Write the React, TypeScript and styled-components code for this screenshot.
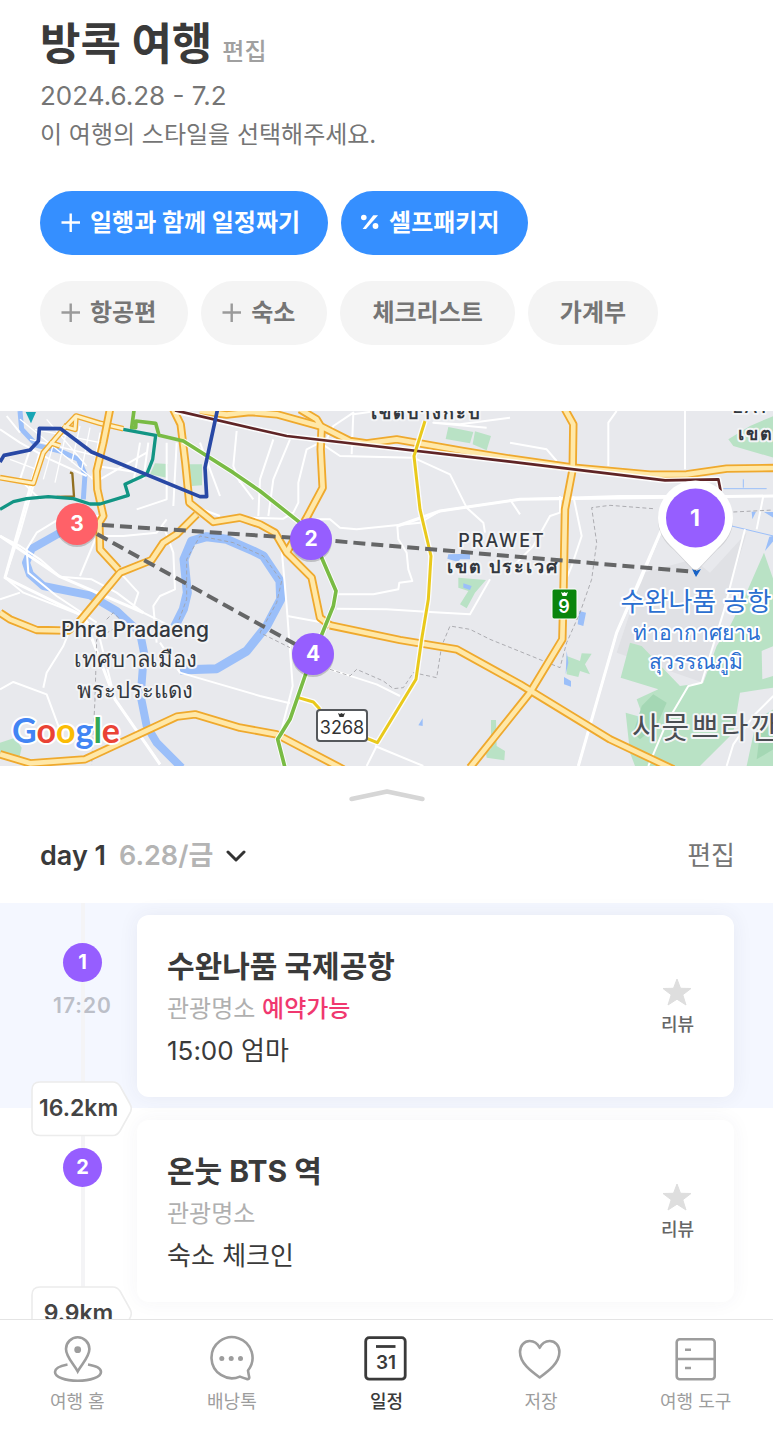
import React from "react";
import styled, { createGlobalStyle } from "styled-components";

const font = `Inter, "Noto Sans CJK KR", "Noto Sans", sans-serif`;

const GlobalStyle = createGlobalStyle`
  *, *::before, *::after { box-sizing: border-box; }
  body { margin: 0; background: #fff; font-family: ${font}; color: #3a3a3a; }
  button { font-family: inherit; border: 0; margin: 0; padding: 0; background: none; cursor: pointer; }
  h1, h2, h3, p, ul { margin: 0; padding: 0; }
  svg { display: block; }
`;

const Screen = styled.div`
  display: flex;
  flex-direction: column;
  height: 100vh;
  background: #fff;
`;

const Content = styled.main`
  flex: 1;
  min-height: 0;
  overflow-y: auto;
  scrollbar-width: none;
`;

const TripHeader = styled.header`
  padding: 12px 40px 66px;
`;

const TitleRow = styled.div`
  display: flex;
  align-items: baseline;
  gap: 10px;
  height: 64px;
`;

const Title = styled.h1`
  font-size: 44px;
  line-height: 64px;
  font-weight: 700;
`;

const TextButton = styled.button<{ $tone: string; $size: number; $weight?: number }>`
  font-size: ${(p) => p.$size}px;
  line-height: 38px;
  font-weight: ${(p) => p.$weight ?? 400};
  color: ${(p) => p.$tone};
`;

const Meta = styled.p<{ $dates?: boolean }>`
  font-size: ${(p) => (p.$dates ? 26 : 24)}px;
  line-height: 39px;
  color: #757575;
`;

const PillRow = styled.div<{ $top: number }>`
  display: flex;
  flex-wrap: wrap;
  gap: 13px;
  margin-top: ${(p) => p.$top}px;
`;

const Pill = styled.button<{ $primary?: boolean; $icon?: boolean }>`
  display: flex;
  align-items: center;
  gap: 8px;
  height: 64px;
  padding: 0 ${(p) => (p.$primary ? 28 : 32)}px 0 ${(p) => (p.$icon ? 20 : 32)}px;
  border-radius: 32px;
  font-size: 24px;
  line-height: 36px;
  font-weight: ${(p) => (p.$primary ? 700 : 600)};
  color: ${(p) => (p.$primary ? "#fff" : "#757575")};
  background: ${(p) => (p.$primary ? "#358fff" : "#f4f4f4")};
`;

const MapFrame = styled.section`
  height: 355px;
  overflow: hidden;
  background: #e8e9ed;
  svg { width: 100%; height: 100%; }
`;

const Handle = styled.button`
  display: flex;
  align-items: center;
  justify-content: center;
  width: 100%;
  height: 58px;
`;

const DayBar = styled.div`
  display: flex;
  align-items: center;
  justify-content: space-between;
  height: 79px;
  padding: 0 38px 16px 40px;
`;

const DayPicker = styled.button`
  display: flex;
  align-items: center;
  gap: 13px;
  font-size: 27px;
  line-height: 38px;
  font-weight: 600;
  color: #3a3a3a;
`;

const DayDate = styled.span`
  color: #b4b4b4;
`;

const Stops = styled.ul`
  list-style: none;
`;

const Stop = styled.li<{ $active?: boolean }>`
  position: relative;
  display: grid;
  grid-template-columns: 137px 1fr;
  padding: 12px 39px 11px 0;
  background: ${(p) => (p.$active ? "#f4f7ff" : "transparent")};
`;

const Timeline = styled.div`
  display: flex;
  flex-direction: column;
  align-items: center;
  gap: 9px;
  margin: -12px 0 -11px;
  padding: 40px 0 0 28px;
  background: linear-gradient(#f4f4f6, #f4f4f6) 81px 0 / 4px 100% no-repeat;
`;

const StopNumber = styled.span`
  width: 39px;
  height: 39px;
  border-radius: 50%;
  background: #965eff;
  color: #fff;
  font-size: 20px;
  line-height: 39px;
  font-weight: 700;
  text-align: center;
`;

const StopTime = styled.time`
  font-size: 21px;
  line-height: 30px;
  font-weight: 600;
  letter-spacing: 1px;
  color: #bcbfc8;
`;

const Card = styled.article<{ $active?: boolean }>`
  display: flex;
  align-items: center;
  justify-content: space-between;
  padding: 30px 40px 26px 30px;
  border-radius: 12px;
  background: #fff;
  box-shadow: 0 0 20px rgba(60, 60, 90, ${(p) => (p.$active ? 0.07 : 0.05)});
`;

const StopTitle = styled.h3`
  font-size: 30px;
  line-height: 42px;
  font-weight: 700;
`;

const StopKind = styled.p`
  font-size: 24px;
  line-height: 44px;
  color: #b0b0b0;
`;

const Bookable = styled.a`
  color: #f0386f;
  font-weight: 500;
  text-decoration: none;
`;

const StopNote = styled.p`
  font-size: 26px;
  line-height: 40px;
`;

const Review = styled.button`
  display: flex;
  flex-direction: column;
  align-items: center;
  gap: 6px;
  font-size: 18px;
  line-height: 26px;
  font-weight: 500;
  color: #666;
`;

const Distance = styled.div`
  position: absolute;
  left: 31px;
  bottom: -29px;
  z-index: 1;
  width: 101px;
  height: 56px;
  svg { position: absolute; inset: 0; }
`;

const DistanceText = styled.span`
  position: relative;
  display: block;
  width: 95px;
  font-size: 23px;
  line-height: 55px;
  font-weight: 600;
  text-align: center;
  color: #444;
`;

const TabBar = styled.nav`
  position: relative;
  z-index: 2;
  display: flex;
  height: 118px;
  padding-top: 14px;
  border-top: 1px solid #e4e4e4;
  background: #fff;
`;

const Tab = styled.a<{ $active?: boolean }>`
  flex: 1;
  display: flex;
  flex-direction: column;
  align-items: center;
  gap: 5px;
  font-size: 18px;
  line-height: 26px;
  font-weight: ${(p) => (p.$active ? 500 : 400)};
  color: ${(p) => (p.$active ? "#3a3a3a" : "#9d9d9d")};
  text-decoration: none;
`;

const Plus = ({ color }: { color: string }) => (
  <svg width="22" height="22" viewBox="0 0 22 22" stroke={color} strokeWidth="2.4">
    <path d="M1.500 10.500H20M10.700 1.500V20" />
  </svg>
);

const Percent = () => (
  <svg width="20" height="22" viewBox="0 0 20 22" fill="#fff">
    <circle cx="2.800" cy="5.500" r="2.800" />
    <circle cx="14.500" cy="14" r="2.900" />
    <path d="M12.300 3.200h4.800L5 17H1.600z" />
  </svg>
);

const Star = () => (
  <svg width="30" height="28" viewBox="0 0 30 28" fill="#dedede" stroke="#dedede" strokeWidth="1" strokeLinejoin="round">
    <path d="M15 1L18.500 10.300L29 10.500L20.800 16.800L24 27L15 21.200L6 27L9.200 16.800L1 10.500L11.500 10.300Z" />
  </svg>
);

const TagShape = () => (
  <svg width="101" height="56" viewBox="0 0 101 56" fill="#fff" stroke="#ececec" strokeWidth="1.600">
    <path d="M9 1H82Q86 1 89 5L99 23Q101.500 27.500 99 32L89 50Q86 54.500 82 54.500H9Q1 54.500 1 46.500V9Q1 1 9 1Z" />
  </svg>
);

const HomeIcon = () => (
  <svg width="52" height="50" viewBox="0 0 52 50" fill="none" stroke="currentColor" strokeWidth="2.600">
    <path d="M26.700 37.500C22.500 29.500 15 23 15 15A11.700 11.700 0 0 1 38.400 15C38.400 23 31 29.500 26.700 37.500Z" />
    <circle cx="26.700" cy="15.700" r="3.400" fill="currentColor" stroke="none" />
    <path d="M16.500 30.500C8 32 4 35 4 38C4 43 14 46.800 26.700 46.800S50 43 50 38C50 35 46 32 37 30.500" />
  </svg>
);

const TalkIcon = () => (
  <svg width="52" height="50" viewBox="0 0 52 50" fill="none" stroke="currentColor" strokeWidth="2.600" strokeLinejoin="round">
    <path d="M33.900 42.600A20.500 20.500 0 1 1 42 36.500Q42.600 40.500 43.200 43Q43.600 45.500 40.900 45.100Q37.400 44 33.900 42.600Z" />
    <g fill="currentColor" stroke="none">
      <circle cx="15.800" cy="24.500" r="2.500" />
      <circle cx="25.200" cy="24.500" r="2.500" />
      <circle cx="34.500" cy="24.500" r="2.500" />
    </g>
  </svg>
);

const CalendarIcon = () => (
  <svg width="52" height="50" viewBox="0 0 52 50" fill="none" stroke="currentColor" strokeWidth="2.800">
    <rect x="5.700" y="3.700" width="39.500" height="41.500" rx="3.500" />
    <path d="M16 12.500H35.500" />
    <text x="26" y="35" textAnchor="middle" fill="currentColor" stroke="none" fontFamily="Inter, sans-serif" fontSize="19" fontWeight="600">31</text>
  </svg>
);

const HeartIcon = () => (
  <svg width="52" height="50" viewBox="0 0 52 50" fill="none" stroke="currentColor" strokeWidth="2.600" strokeLinejoin="round">
    <path d="M24.700 43.500C15.700 37 5 29 5 18C5 11.500 9.200 7 14.700 7C19.200 7 22.700 9.600 24.700 13.800C26.700 9.600 30.200 7 34.700 7C40.200 7 44.400 11.500 44.400 18C44.400 29 33.700 37 24.700 43.500Z" />
  </svg>
);

const DrawerIcon = () => (
  <svg width="52" height="50" viewBox="0 0 52 50" fill="none" stroke="currentColor" strokeWidth="2.600">
    <rect x="6.700" y="5.300" width="38" height="40" rx="3" />
    <path d="M7 25H45M15 15.700H21M15 34H21" />
  </svg>
);

// Road and transit geometry is kept at three times the map's size.
const HIGHWAYS = [
  "M0 640L30 660L110 692L205 694L240 665L360 520L455 482L490 430L530 405L590 345",
  "M330 30L310 130L290 215L292 270L310 350L298 370L300 450L355 510",
  "M520 30L542 75L556 190L568 310L640 368L720 355L780 375L825 400L860 460L935 535L960 655L990 678",
  "M990 678L1200 722L1370 750L1560 855L1830 1020L2020 1110",
  "M600 35L680 46L750 38L830 45L965 82L1050 125L1100 132L1190 120L1390 155L1530 178L1720 205L1950 226L2060 225L2180 208L2320 206",
  "M900 30L950 60L965 85L962 150L968 265L920 355L860 460",
  "M0 1065L90 1092L255 1080L530 952L585 945L720 985L830 1005L1030 1110",
  "M1695 30L1720 75L1718 210L1695 330L1690 600L1687 720L1590 880L1410 1105",
];

const AVENUES = ["M0 235L100 252L130 160L190 90L228 50L300 72L370 88", "M228 50L225 90L190 80M150 130L180 140"];

const STREETS = [
  "M0 410L60 440L120 480L180 532L275 540L350 580L430 640L530 690",
  "M120 160L100 260L60 400L15 535L70 580L250 650L300 720L345 900L480 1095",
  "M0 600L60 580M300 350L200 345L110 400L80 450L85 520L170 590L290 670",
  "M130 865L140 820L190 740L210 690M0 870L40 848L140 885L190 1020",
  "M470 730L460 620L480 590L525 570L520 460L490 380M480 730L540 820L780 890L870 912",
  "M240 530L290 410L370 410L470 400L500 360M360 520L415 580L400 625",
  "M580 320L660 350M600 130L660 290M700 220L760 300M710 95L700 200L720 250",
  "M420 130L400 250M445 130L430 240M500 130L500 300L410 330M530 130L520 320M300 240L440 160M290 200L420 220",
  "M0 90L60 130L150 180L260 230M20 50L60 100M90 150L60 240L120 300",
  "M820 120L780 240L775 350M870 120L820 240L805 350M750 355L850 358L880 340L895 310L895 250L920 150L960 130L1020 170L1240 175L1350 225L1400 325L1450 370L1455 400",
  "M975 130L1000 80L1060 40L1055 165M1060 45L1130 35",
  "M930 360L990 360L1020 385L1070 390L1260 370L1320 335L1560 300L1860 290L2320 290",
  "M1192 380L1195 420L1220 460L1225 510L1237 545L1198 550L1195 570L1120 585H1010",
  "M1010 628L1160 630L1290 638L1410 645L1470 540",
  "M862 650L980 672M845 450L860 620L878 860L840 1010M990 810L1130 855L1200 890",
  "M1125 1040L1270 1100M1130 1040L1100 1100",
  "M1530 130L1640 150L1670 185M1850 35L1825 70L1825 200M2055 35L2055 210M1530 55L1380 75L1300 70L1460 85",
  "M1985 390L1920 550L1850 700L1735 1100M2235 390L2170 640L2105 850L2065 860L2000 970L1945 1100",
  "M1680 290L1680 340L1650 350L1600 440L1550 490M1720 290L1745 410L1715 500L1690 560",
  "M2290 290L2270 390M2320 890L2260 950L2200 1035L2180 1100M1560 345L1530 300",
];

const Roads = () => (
  <g transform="scale(0.33333) translate(0 -35)" fill="none" strokeLinejoin="round">
    <path d="M1930 520L2080 480L2130 520L2240 400L2180 600L2110 850L1850 760Z" fill="#e0e1e5" />
    <g fill="#b9e2c5">
      <path d="M465 192L503 194L500 235L450 225Z" />
      <path d="M567 195L606 195L606 258L575 260Z" />
      <path d="M1345 83L1420 98L1410 132L1337 119ZM1425 96L1473 110L1460 153L1418 135Z" />
      <path d="M1375 535L1458 542L1425 580L1400 627L1380 615L1405 575L1375 565Z" />
      <path d="M1473 962L1488 962L1490 1040L1515 1055L1513 1083L1460 1075L1458 1060L1473 1048Z" />
      <path d="M0 1030L45 1015L65 1045L55 1090L0 1070Z" />
      <path d="M2185 120L2250 80L2320 50V175L2200 140Z" />
      <path d="M2292 460L2320 540V740L2285 755L2287 840L2320 830V865L2220 880L2200 1000L2100 1100H1905L1890 1060L1877 940L1930 955L1910 900L1975 870L1862 835L1890 730L1925 740L2040 860L2110 850L2150 740L2190 680L2235 590Z" />
      <path d="M1700 770L1740 785L1745 762L1775 763L1755 795L1770 825L1740 815L1735 833L1700 825Z" />
      <path d="M2320 930L2270 960L2240 1100H2320Z" />
    </g>
    <path d="M1925 920L1960 885L2000 910L1970 980L1920 1020L1900 1000Z" fill="#a4d7b4" />
    <path d="M2280 1000L2320 970V1050L2270 1080Z" fill="#a4d7b4" />

    <g stroke="#9bbff9">
      <path d="M60 35L65 90L110 138L180 155L235 180L255 225L250 300" strokeWidth="15" />
      <path d="M180 400L95 448L78 490L90 525L130 560L270 588L350 635L420 700L432 760L422 890L440 980L470 1030L545 1105" strokeWidth="24" />
      <path d="M520 690L550 630L562 580L552 480L575 425L620 412L680 420L760 455L790 470L840 545L842 600L800 680L740 755L650 808L540 812" strokeWidth="27" />
    </g>
    <g fill="#9bbff9">
      <path d="M1345 465L1410 463L1410 480L1380 480L1375 488L1342 478ZM1390 552L1415 560L1410 572L1390 565Z" />
      <path d="M1738 635L1758 640L1750 680L1733 675ZM1700 755L1705 790L1697 825ZM1692 833L1713 845V862L1692 855Z" />
      <path d="M1268 957V980L1255 978ZM2255 337L2268 337L2257 360ZM2292 338L2320 338V355ZM2320 410V425L2295 455L2308 412Z" />
    </g>
    <path d="M2195 380L2320 410M2170 268H2300M2230 240V265" stroke="#9bbff9" strokeWidth="3" />

    <g stroke="#fff" strokeWidth="6">
      {STREETS.map((d) => <path key={d} d={d} />)}
    </g>
    <path d="M0 410L180 532L430 640M120 160L15 535L250 650L345 900L480 1095M1192 380L1320 335L1560 300L2320 290M1985 390L1850 700L1735 1100" stroke="#fff" strokeWidth="9" />
    <path
      d="M105 90L300 130M90 120L290 170M60 60L280 240M170 100L130 240M205 70L165 250M240 80L215 190M270 85L245 210M300 100L275 240M140 60L260 200M30 180L110 210"
      stroke="#fff"
      strokeWidth="4"
    />

    <g stroke="#a0a0a5" strokeWidth="2.500" strokeDasharray="12 8">
      <path d="M320 660L340 640L370 670L290 720L285 900L275 1095" />
      <path d="M530 680L560 600L560 480L600 410L700 430L790 470L845 545L830 610L780 700L870 745" />
      <path d="M990 810L1050 830L1070 810L1150 845L1180 868L1210 865L1240 820L1310 835L1325 740L1350 680L1410 690L1470 720L1680 805L1700 730L1740 640L1775 540L1790 430L1775 325L1830 318L1960 328M2200 338L2320 332" />
    </g>

    <g stroke="#efa92d" strokeWidth="17">{AVENUES.map((d) => <path key={d} d={d} />)}</g>
    <g stroke="#fff0c1" strokeWidth="9">{AVENUES.map((d) => <path key={d} d={d} />)}</g>
    <g stroke="#efa92d" strokeWidth="25">{HIGHWAYS.map((d) => <path key={d} d={d} />)}</g>
    <g stroke="#ffe8a8" strokeWidth="14">{HIGHWAYS.map((d) => <path key={d} d={d} />)}</g>

    <g strokeWidth="17" stroke="#fff" opacity="0.9">
      <path d="M525 35L780 92L860 110L1530 187L1995 243L2155 240L2162 275" />
      <path d="M1275 65L1242 170L1260 330L1293 470L1285 600L1265 720L1248 840L1132 1030L1095 1015M895 895L940 908L960 930" />
      <path d="M550 125L700 220L780 275L900 370L965 475L1008 575L1000 620L915 830L870 960L833 1020L855 1105" />
    </g>
    <path d="M525 33L780 92L860 110L1530 187L1995 243L2155 240L2162 275" stroke="#5f2426" strokeWidth="8" />
    <path d="M1275 65L1242 170L1260 330L1293 470L1285 600L1265 720L1248 840L1132 1030L1095 1015M895 895L940 908L960 930" stroke="#e9c91c" strokeWidth="9" />
    <path
      d="M402 33L395 85L407 85L408 65L467 72L477 108L550 125L700 220L780 275L900 370L965 475L1008 575L1000 620L915 830L870 960L833 1020L855 1105"
      stroke="#79bb44"
      strokeWidth="11"
    />
    <path d="M210 219L217 222L222 291L170 293" stroke="#927021" strokeWidth="7" />
    <path d="M0 330L40 307L80 298L145 292L220 298L270 314L300 314L385 288L375 255L440 225L458 180L467 108L370 90" stroke="#129584" strokeWidth="10" />
    <path d="M0 188L12 168L90 152L115 125L118 87L182 88L275 158L600 292L620 292L615 205L652 33" stroke="#2848a5" strokeWidth="11" />
    <path d="M77 38H108L93 72Z" fill="#18a5b5" />
  </g>
);

const NumberPin = ({ x, y, n, color = "#965eff" }: { x: number; y: number; n: number; color?: string }) => (
  <g>
    <circle cx={x} cy={y + 2} r="21" fill="#000" opacity="0.18" />
    <circle cx={x} cy={y} r="21" fill={color} />
    <text x={x} y={y + 7} textAnchor="middle" fill="#fff" fontSize="21" fontWeight="700">{n}</text>
  </g>
);

const TripMap = () => (
  <svg viewBox="0 0 773 355" preserveAspectRatio="xMidYMid slice" fontFamily={font} role="img" aria-label="방콕 여행 지도">
    <Roads />
    <g fill="#33383e" stroke="#f3f4f6" strokeWidth="4" strokeLinejoin="round" paintOrder="stroke" textAnchor="middle">
      <g fontSize="18" fontWeight="600" letterSpacing="2">
        <text x="426" y="8">เขตบางกะปิ</text>
        <text x="502" y="136" fontWeight="500">PRAWET</text>
        <text x="503" y="162">เขต ประเวศ</text>
        <text x="752" y="2" fontWeight="500">LAT</text>
        <text x="756" y="29">เขต</text>
      </g>
      <text x="135" y="226" fontSize="21" fontWeight="500">Phra Pradaeng</text>
      <text x="135" y="256" fontSize="22" fontWeight="500">เทศบาลเมือง</text>
      <text x="135" y="287" fontSize="22" fontWeight="500">พระประแดง</text>
      <text x="706" y="327" fontSize="30" fill="#4a4d52" letterSpacing="2">사뭇쁘라깐</text>
    </g>
    <g fill="#2b6fd0" stroke="#fff" strokeWidth="4" strokeLinejoin="round" paintOrder="stroke" textAnchor="middle">
      <text x="696" y="200" fontSize="26">수완나품 공항</text>
      <text x="696" y="229" fontSize="21" fontWeight="500">ท่าอากาศยาน</text>
      <text x="696" y="258" fontSize="21" fontWeight="500">สุวรรณภูมิ</text>
    </g>

    <g>
      <rect x="317" y="299" width="50" height="31" rx="3" fill="#fff" stroke="#55585c" strokeWidth="2" />
      <path d="M338 302L340 303L341.500 302L343 303L345 302L343.500 306H339.500Z" fill="#333" />
      <text x="342" y="323" fontSize="18" textAnchor="middle" fill="#333">3268</text>
      <rect x="552" y="178" width="25" height="30" rx="2" fill="#0a850d" stroke="#fff" strokeWidth="1" />
      <path d="M561 181L563 182L564.500 181L566 182L568 181L566.500 185H562.500Z" fill="#fff" />
      <text x="564" y="202" fontSize="18" fontWeight="600" textAnchor="middle" fill="#fff">9</text>
    </g>

    <g fontFamily="Lato, sans-serif" fontSize="34" fontWeight="700" stroke="#fff" strokeWidth="4" strokeLinejoin="round" paintOrder="stroke">
      <text x="12" y="332">
        <tspan fill="#4285f4">G</tspan>
        <tspan fill="#ea4335">o</tspan>
        <tspan fill="#fbbc05">o</tspan>
        <tspan fill="#4285f4">g</tspan>
        <tspan fill="#34a853">l</tspan>
        <tspan fill="#ea4335">e</tspan>
      </text>
    </g>

    <g fill="none" stroke="#656667" strokeWidth="4" strokeDasharray="12 6">
      <path d="M102 114L311 128L696 161" />
      <path d="M97 123L313 243" />
    </g>
    <path d="M658 109A37.500 37.500 0 1 1 733 109C733 121 727 131 717 139L699 158Q695.500 161 692 158L674 139C664 131 658 121 658 109Z" fill="#000" opacity="0.1" />
    <path d="M658 107A37.500 37.500 0 1 1 733 107C733 119 727 129 717 138L699 157Q695.500 160 692 157L674 138C664 129 658 119 658 107Z" fill="#fff" />
    <path d="M692 158L696 160L701 158L696 166Z" fill="#1763c8" />
    <circle cx="695.500" cy="107" r="29.500" fill="#965eff" />
    <text x="695" y="115" fontSize="23" fontWeight="700" textAnchor="middle" fill="#fff">1</text>
    <NumberPin x={311} y={128} n={2} />
    <NumberPin x={77} y={113} n={3} color="#ff6168" />
    <NumberPin x={313} y={243} n={4} />
  </svg>
);

type StopData = {
  n: number;
  time?: string;
  title: string;
  kind: string;
  bookable?: boolean;
  note: string;
  distance: string;
};

const STOPS: StopData[] = [
  { n: 1, time: "17:20", title: "수완나품 국제공항", kind: "관광명소", bookable: true, note: "15:00 엄마", distance: "16.2km" },
  { n: 2, title: "온눗 BTS 역", kind: "관광명소", note: "숙소 체크인", distance: "9.9km" },
];

const TABS = [
  { label: "여행 홈", Icon: HomeIcon },
  { label: "배낭톡", Icon: TalkIcon },
  { label: "일정", Icon: CalendarIcon, active: true },
  { label: "저장", Icon: HeartIcon },
  { label: "여행 도구", Icon: DrawerIcon },
];

export default function App() {
  return (
    <>
      <GlobalStyle />
      <Screen>
        <Content>
          <TripHeader>
            <TitleRow>
              <Title>방콕 여행</Title>
              <TextButton $tone="#a0a0a0" $size={24} $weight={500}>편집</TextButton>
            </TitleRow>
            <Meta $dates>2024.6.28 - 7.2</Meta>
            <Meta>이 여행의 스타일을 선택해주세요.</Meta>
            <PillRow $top={37}>
              <Pill $primary $icon><Plus color="#fff" />일행과 함께 일정짜기</Pill>
              <Pill $primary $icon><Percent />셀프패키지</Pill>
            </PillRow>
            <PillRow $top={26}>
              <Pill $icon><Plus color="#9a9a9a" />항공편</Pill>
              <Pill $icon><Plus color="#9a9a9a" />숙소</Pill>
              <Pill>체크리스트</Pill>
              <Pill>가계부</Pill>
            </PillRow>
          </TripHeader>

          <MapFrame><TripMap /></MapFrame>

          <Handle aria-label="지도 접기">
            <svg width="78" height="14" viewBox="0 0 78 14" fill="none" stroke="#d6d6d6" strokeWidth="4.500" strokeLinecap="round" strokeLinejoin="round">
              <path d="M3.500 11L39 3.500L74.500 11" />
            </svg>
          </Handle>

          <DayBar>
            <DayPicker>
              <span>day 1</span>
              <DayDate>6.28/금</DayDate>
              <svg width="20" height="14" viewBox="0 0 20 14" fill="none" stroke="#333" strokeWidth="3" strokeLinecap="round" strokeLinejoin="round">
                <path d="M2 3L10 11L18 3" />
              </svg>
            </DayPicker>
            <TextButton $tone="#757575" $size={26}>편집</TextButton>
          </DayBar>

          <Stops>
            {STOPS.map((s) => (
              <Stop key={s.n} $active={s.n === 1}>
                <Timeline>
                  <StopNumber>{s.n}</StopNumber>
                  {s.time && <StopTime>{s.time}</StopTime>}
                </Timeline>
                <Card $active={s.n === 1}>
                  <div>
                    <StopTitle>{s.title}</StopTitle>
                    <StopKind>{s.kind} {s.bookable && <Bookable href="#book">예약가능</Bookable>}</StopKind>
                    <StopNote>{s.note}</StopNote>
                  </div>
                  <Review><Star />리뷰</Review>
                </Card>
                <Distance>
                  <TagShape />
                  <DistanceText>{s.distance}</DistanceText>
                </Distance>
              </Stop>
            ))}
          </Stops>
        </Content>

        <TabBar>
          {TABS.map(({ label, Icon, active }) => (
            <Tab key={label} href="#tab" $active={active}><Icon />{label}</Tab>
          ))}
        </TabBar>
      </Screen>
    </>
  );
}
